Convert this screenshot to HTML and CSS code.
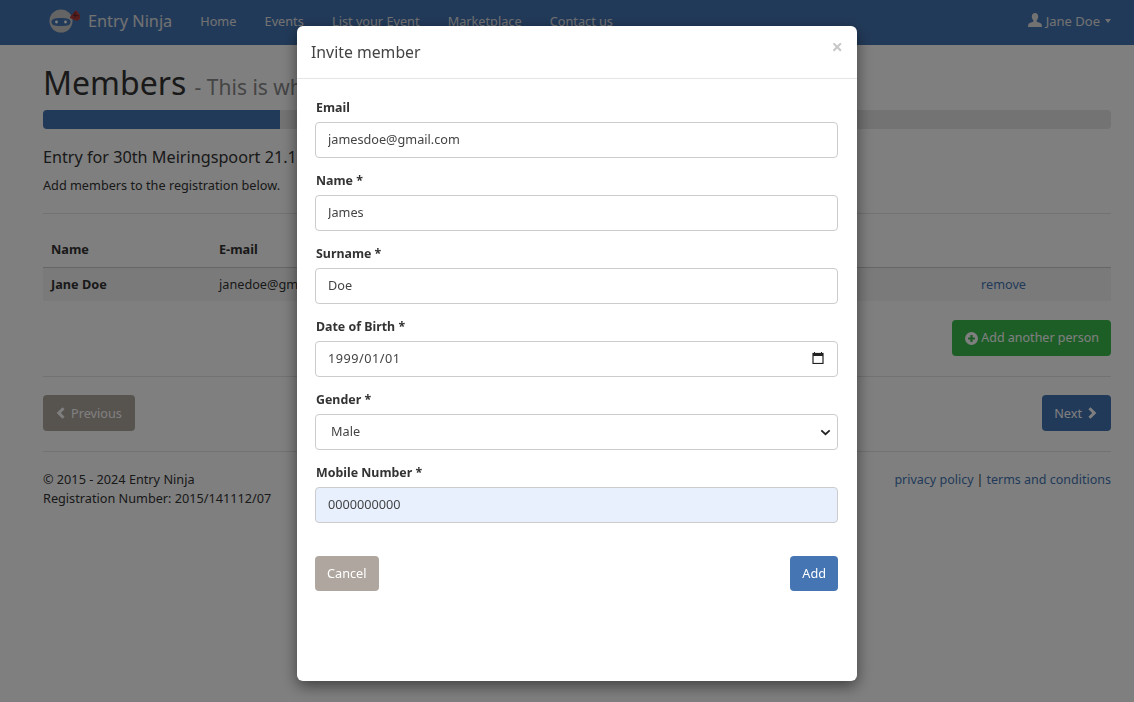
FILE: index.html
```html
<!DOCTYPE html>
<html lang="en">
<head>
<meta charset="utf-8">
<title>Members - Entry Ninja</title>
<link rel="stylesheet" href="styles.css">
</head>
<body>
<header class="navbar">
  <a class="brand">
    <svg class="logo" viewBox="0 0 32 24" width="32" height="24">
      <circle cx="12" cy="12" r="11.500" fill="#c9c9c9"/>
      <path d="M2.500 13c0-3 2.500-4 9.500-4s9.500 1 9.500 4-2.500 4-9.500 4-9.500-1-9.500-4z" fill="#4575b3"/>
      <circle cx="7.500" cy="13" r="1.400" fill="#fff"/>
      <circle cx="16.500" cy="13" r="1.400" fill="#fff"/>
      <path d="M21 8l6-7 4 5 0 4-3 2-7-3z" fill="#b23a3a"/>
      <path d="M26 3l0 6M24 6l6 1" stroke="#5a2a30" stroke-width="1"/>
    </svg>
    <span>Entry Ninja</span>
  </a>
  <nav class="nav">
    <a>Home</a><a>Events</a><a>List your Event</a><a>Marketplace</a><a>Contact us</a>
  </nav>
  <a class="user">
    <svg class="ico-user" viewBox="0 0 14 14" width="14" height="14"><path d="M7 0c2 0 3.200 1.500 3.200 3.600 0 1.500-.7 3-1.500 3.700v1.100c0 .6 4.300 1.300 4.800 2.600.3.800.5 2 .5 3H0c0-1 .2-2.200.5-3C1 9.700 5.300 9 5.300 8.400V7.300c-.8-.7-1.500-2.200-1.500-3.700C3.800 1.500 5 0 7 0z" fill="currentColor"/></svg>
    Jane Doe <i class="caret"></i>
  </a>
</header>

<main class="container">
  <h1 class="title">Members <small>- This is who</small></h1>
  <div class="progress"><div class="progress-bar" style="width:22.2%"></div></div>
  <h4 class="entry">Entry for 30th Meiringspoort 21.1km</h4>
  <p class="intro">Add members to the registration below.</p>
  <hr class="rule-a">
  <table class="table">
    <thead><tr><th class="c-name">Name</th><th>E-mail</th><th class="c-act"></th></tr></thead>
    <tbody><tr><td class="strong">Jane Doe</td><td>janedoe@gmail.com</td><td class="c-act"><a class="link">remove</a></td></tr></tbody>
  </table>
  <div class="add-row">
    <button class="btn btn-green">
      <svg viewBox="0 0 14 14" width="13" height="13"><path fill-rule="evenodd" d="M7 0a7 7 0 1 1 0 14A7 7 0 0 1 7 0zM5.800 3.300v2.500H3.300v2.400h2.500v2.500h2.400V8.200h2.500V5.800H8.200V3.300z" fill="currentColor"/></svg>
      Add another person
    </button>
  </div>
  <hr class="rule-b">
  <div class="pager">
    <button class="btn btn-grey">
      <svg viewBox="0 0 12 14" width="10" height="12"><path d="M9 0l2.500 2.500L7 7l4.500 4.500L9 14 2 7z" fill="currentColor"/></svg>
      Previous
    </button>
    <button class="btn btn-blue">
      Next
      <svg viewBox="0 0 12 14" width="10" height="12"><path d="M3 0L.5 2.500 5 7 .5 11.500 3 14l7-7z" fill="currentColor"/></svg>
    </button>
  </div>
  <hr class="rule-b">
  <footer class="footer">
    <div>© 2015 - 2024 Entry Ninja<br>Registration Number: 2015/141112/07</div>
    <div class="legal"><a class="link">privacy policy</a><span class="sep">|</span><a class="link">terms and conditions</a></div>
  </footer>
</main>

<div class="backdrop"></div>

<section class="modal">
  <div class="modal-header">
    <h4>Invite member</h4>
    <span class="close">×</span>
  </div>
  <form class="modal-body">
    <div class="group"><label>Email</label><input class="control" type="text" value="jamesdoe@gmail.com"></div>
    <div class="group"><label>Name *</label><input class="control" type="text" value="James"></div>
    <div class="group"><label>Surname *</label><input class="control" type="text" value="Doe"></div>
    <div class="group"><label>Date of Birth *</label>
      <div class="field-wrap">
        <input class="control date" type="text" value="1999/01/01">
        <svg class="cal" viewBox="0 0 12 12" width="12" height="12"><path d="M2.500 0v1.500M9.500 0v1.500" stroke="#222" stroke-width="1"/><rect x="1" y="1.500" width="10" height="10" fill="none" stroke="#222" stroke-width="1.200"/><rect x="1" y="1.500" width="10" height="2.500" fill="#222"/></svg>
      </div>
    </div>
    <div class="group"><label>Gender *</label>
      <div class="field-wrap">
        <select class="control pick"><option>Male</option><option>Female</option></select>
        <svg class="chev" viewBox="0 0 12 8" width="11" height="7"><path d="M1.200 1.500L6 6l4.800-4.500" fill="none" stroke="#222" stroke-width="2"/></svg>
      </div>
    </div>
    <div class="group"><label>Mobile Number *</label><input class="control autofill" type="text" value="0000000000"></div>
    <div class="actions">
      <button type="button" class="btn m-cancel">Cancel</button>
      <button type="button" class="btn m-add">Add</button>
    </div>
  </form>
</section>
</body>
</html>
```
FILE: styles.css
```css
* { box-sizing: border-box; }
html, body { height: 100%; }
body {
  margin: 0;
  overflow: hidden;
  background: #fff;
  color: #333;
  font: 12.700px/20px "Noto Sans", "Open Sans", sans-serif;
}
a { text-decoration: none; }

.navbar {
  display: flex;
  align-items: center;
  height: 45px;
  padding: 0 23px 4px 49px;
  background: #4575b3;
  color: #e4e4e4;
}
.brand { display: flex; align-items: center; gap: 7px; font-size: 16.300px; margin-right: 14px; }
.nav { display: flex; flex: 1; gap: 28.250px; font-size: 12.700px; padding-left: 14px; }
.user { display: flex; align-items: center; gap: 4px; font-size: 13px; }
.ico-user { margin-top: -2px; }
.caret {
  display: inline-block;
  border-top: 4px solid currentColor;
  border-left: 3.500px solid transparent;
  border-right: 3.500px solid transparent;
  margin-left: 1px;
}

.container { padding: 0 23px 0 43px; }
.title { margin: 19px 0 0; font-size: 32px; line-height: 38px; font-weight: 400; color: #333; }
.title small { font-size: 21px; color: #8a8a8a; }
.progress { height: 19px; margin-top: 4px; border-radius: 4px; background: #e6e6e6; overflow: hidden; }
.progress-bar { height: 100%; background: #4575b3; }
.entry { margin: 18px 0 0; font-size: 16.200px; line-height: 20px; font-weight: 400; }
.intro { margin: 8px 0 0; }
.rule-a, .rule-b { border: 0; border-top: 1px solid #e4e4e4; margin: 0; }
.rule-a { margin-top: 18px; }
.table { width: 100%; border-collapse: collapse; margin-top: 17px; }
.table th { text-align: left; height: 36px; padding: 0 8px; border-bottom: 1px solid #ccc; }
.table td { height: 34px; padding: 0 8px; background: #f5f5f5; }
.c-name { width: 168px; }
.c-act { width: 138px; }
.strong { font-weight: 700; }
.link { color: #4575b3; }
.add-row { display: flex; justify-content: flex-end; margin-top: 19px; margin-bottom: 20px; }
.btn {
  font: inherit;
  display: inline-flex;
  align-items: center;
  justify-content: center;
  height: 36px;
  border: 0;
  border-radius: 4px;
  color: #fff;
}
.btn-green { background: #3abc4e; gap: 3px; padding: 0 12px 0 13px; font-size: 12.500px; }
.btn-grey { background: #afa79f; gap: 6px; padding: 0 13px 0 12px; }
.btn-blue { background: #4575b3; gap: 6px; padding: 0 13px 0 12px; }
.pager { display: flex; justify-content: space-between; margin: 18px 0 20px; }
.footer { display: flex; justify-content: space-between; margin-top: 18px; line-height: 19px; }
.legal { font-size: 12.500px; }
.sep { margin: 0 3px; }

.backdrop { position: fixed; inset: 0; background: rgba(0,0,0,.5); }

.modal {
  position: fixed;
  left: 297px;
  top: 26px;
  width: 560px;
  height: 655px;
  background: #fff;
  border-radius: 6px;
  box-shadow: 0 5px 15px rgba(0,0,0,.5);
}
.modal-header {
  display: flex;
  justify-content: space-between;
  align-items: flex-start;
  height: 53px;
  padding: 16px 14px 0 14px;
  border-bottom: 1px solid #e5e5e5;
}
.modal-header h4 { margin: 0; font-size: 15.800px; line-height: 20px; font-weight: 400; color: #444; }
.close { font-size: 20px; font-weight: 700; line-height: 10px; color: #c8c8c8; }
.modal-body { padding: 18px 19px 0 18px; }
.group { margin-bottom: 12.400px; }
.group label { display: block; height: 25px; padding: 1px 0 0 1px; line-height: 20px; font-weight: 700; color: #333; font-size: 12.400px; }
.control {
  display: block;
  width: 100%;
  height: 35.600px;
  padding: 0 12px 1px;
  border: 1px solid #ccc;
  border-radius: 4px;
  background: #fff;
  color: #444;
  font: inherit;
  outline: 0;
}
.autofill { background: #e8f0fe; }
.date { letter-spacing: .5px; }
.pick { appearance: none; padding-left: 15px; }
.field-wrap { position: relative; }
.cal { position: absolute; right: 14px; top: 11px; }
.chev { position: absolute; right: 7px; top: 15px; pointer-events: none; }
.actions { display: flex; justify-content: space-between; margin-top: 33.400px; }
.m-cancel { background: #afa79f; height: 35px; padding: 0 12px; }
.m-add { background: #4575b3; height: 35px; padding: 0 12px; }
```
